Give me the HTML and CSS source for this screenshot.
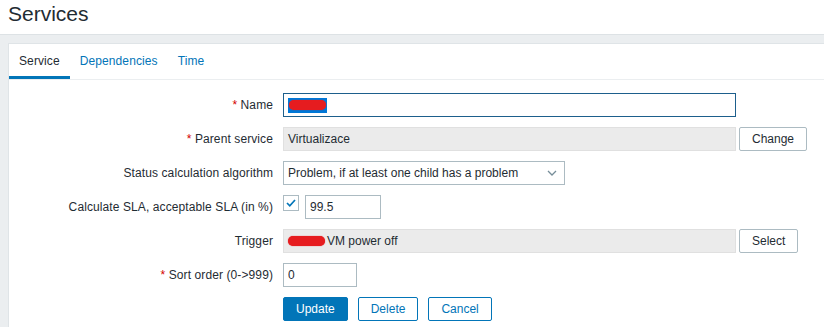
FILE: index.html
```html
<!DOCTYPE html>
<html lang="en">
<head>
    <meta charset="UTF-8">
    <title>Services</title>
    <link rel="stylesheet" href="styles.css">
</head>
<body>
    <div class="header">
        <h1>Services</h1>
    </div>

    <div class="wrapper">
        <div class="container">
            <ul class="tabs">
                <li class="tab active">Service</li>
                <li class="tab">Dependencies</li>
                <li class="tab">Time</li>
            </ul>

            <div class="form">
                <label class="form-label"><span class="req">*</span> Name</label>
                <div class="form-field">
                    <div class="text-box wide focused">
                        <span class="selection"><span class="blob"></span></span>
                    </div>
                </div>

                <label class="form-label"><span class="req">*</span> Parent service</label>
                <div class="form-field">
                    <div class="text-box wide readonly">Virtualizace</div>
                    <button class="btn-alt">Change</button>
                </div>

                <label class="form-label">Status calculation algorithm</label>
                <div class="form-field">
                    <div class="select-box">
                        <select>
                            <option>Problem, if at least one child has a problem</option>
                        </select>
                        <svg class="arrow" width="10" height="6" viewBox="0 0 10 6">
                            <path d="M1 1 L5 5 L9 1" fill="none" stroke="#768d99" stroke-width="1.3"/>
                        </svg>
                    </div>
                </div>

                <label class="form-label">Calculate SLA, acceptable SLA (in %)</label>
                <div class="form-field top">
                    <span class="checkbox">
                        <svg width="12" height="10" viewBox="0 0 12 10">
                            <path d="M2 5 L4.8 7.8 L10 2" fill="none" stroke="#0275b8" stroke-width="1.7"/>
                        </svg>
                    </span>
                    <input class="text-box small" type="text" value="99.5">
                </div>

                <label class="form-label">Trigger</label>
                <div class="form-field">
                    <div class="text-box wide readonly"><span class="blob"></span>VM power off</div>
                    <button class="btn-alt">Select</button>
                </div>

                <label class="form-label"><span class="req">*</span> Sort order (0-&gt;999)</label>
                <div class="form-field">
                    <input class="text-box sort" type="text" value="0">
                </div>

                <div></div>
                <div class="form-field buttons">
                    <button class="btn-main">Update</button>
                    <button class="btn-outline">Delete</button>
                    <button class="btn-outline">Cancel</button>
                </div>
            </div>
        </div>
    </div>
</body>
</html>
```

FILE: styles.css
```css
body {
    margin: 0;
    font-family: "Liberation Sans", Arial, sans-serif;
    font-size: 12px;
    color: #1f2c33;
    background-color: #ebeef0;
}

.header {
    background-color: white;
    height: 34px;
    padding: 0 8px;
    border-bottom: 1px solid #dde2e5;
}

.header h1 {
    margin: 0;
    padding-top: 1px;
    font-size: 21px;
    font-weight: normal;
    line-height: 26px;
    color: #1f2c33;
}

.wrapper {
    padding: 8px 0 0 8px;
}

.container {
    background-color: white;
    border: 1px solid #dfe4e7;
    border-right: none;
    height: 290px;
}

/* Tabs */
.tabs {
    display: flex;
    list-style: none;
    margin: 0;
    padding: 0;
    border-bottom: 1px solid #ebeef0;
}

.tab {
    padding: 3px 10px 0;
    line-height: 29px;
    border-bottom: 3px solid transparent;
    color: #0275b8;
    letter-spacing: 0.1px;
}

.tab.active {
    color: #1f2c33;
    border-bottom-color: #0275b8;
}

/* Form */
.form {
    display: grid;
    grid-template-columns: 264px 1fr;
    column-gap: 10px;
    row-gap: 10px;
    padding-top: 13px;
}

.form-label {
    text-align: right;
    line-height: 24px;
    white-space: nowrap;
    letter-spacing: 0.1px;
}

.req {
    color: #d40000;
}

.form-field {
    display: flex;
    align-items: center;
    gap: 3px;
    height: 24px;
}

.form-field.top {
    align-items: flex-start;
    gap: 6px;
}

.text-box {
    box-sizing: border-box;
    height: 24px;
    padding: 0 4px;
    border: 1px solid #acbbc2;
    background-color: white;
    font-family: inherit;
    font-size: 12px;
    color: #1f2c33;
    display: flex;
    align-items: center;
    outline: none;
}

.text-box.wide {
    width: 453px;
}

.text-box.small {
    width: 76px;
}

.text-box.sort {
    width: 74px;
}

.text-box.focused {
    border-color: #1d5f8c;
}

.text-box.readonly {
    background-color: #ebebeb;
    border-color: #e0e0e0;
}

.selection {
    display: flex;
    align-items: center;
    background-color: #0078d7;
    height: 15px;
    padding: 0 1px;
}

.blob {
    display: inline-block;
    width: 37px;
    height: 10px;
    border-radius: 5px;
    background-color: #e61c1f;
    box-shadow: 0 0 1px #e61c1f;
}

.readonly .blob {
    margin-right: 2px;
}

/* Select */
.select-box {
    position: relative;
    width: 282px;
    height: 24px;
}

.select-box select {
    appearance: none;
    box-sizing: border-box;
    width: 100%;
    height: 24px;
    padding: 0 20px 0 4px;
    border: 1px solid #acbbc2;
    border-radius: 0;
    background-color: white;
    font-family: inherit;
    font-size: 12px;
    color: #1f2c33;
    outline: none;
}

.select-box .arrow {
    position: absolute;
    right: 8px;
    top: 9px;
}

/* Checkbox */
.checkbox {
    box-sizing: border-box;
    width: 16px;
    height: 16px;
    border: 1px solid #acbbc2;
    display: flex;
    align-items: center;
    justify-content: center;
}

/* Buttons */
button {
    box-sizing: border-box;
    height: 24px;
    padding: 0 12px;
    font-family: inherit;
    font-size: 12px;
    border-radius: 2px;
    cursor: pointer;
}

.btn-alt {
    background-color: white;
    border: 1px solid #acbbc2;
    color: #1f2c33;
}

.btn-main {
    background-color: #0275b8;
    border: 1px solid #0275b8;
    color: white;
}

.btn-outline {
    background-color: white;
    border: 1px solid #0275b8;
    color: #0275b8;
}

.form-field.buttons {
    gap: 10px;
}
```
